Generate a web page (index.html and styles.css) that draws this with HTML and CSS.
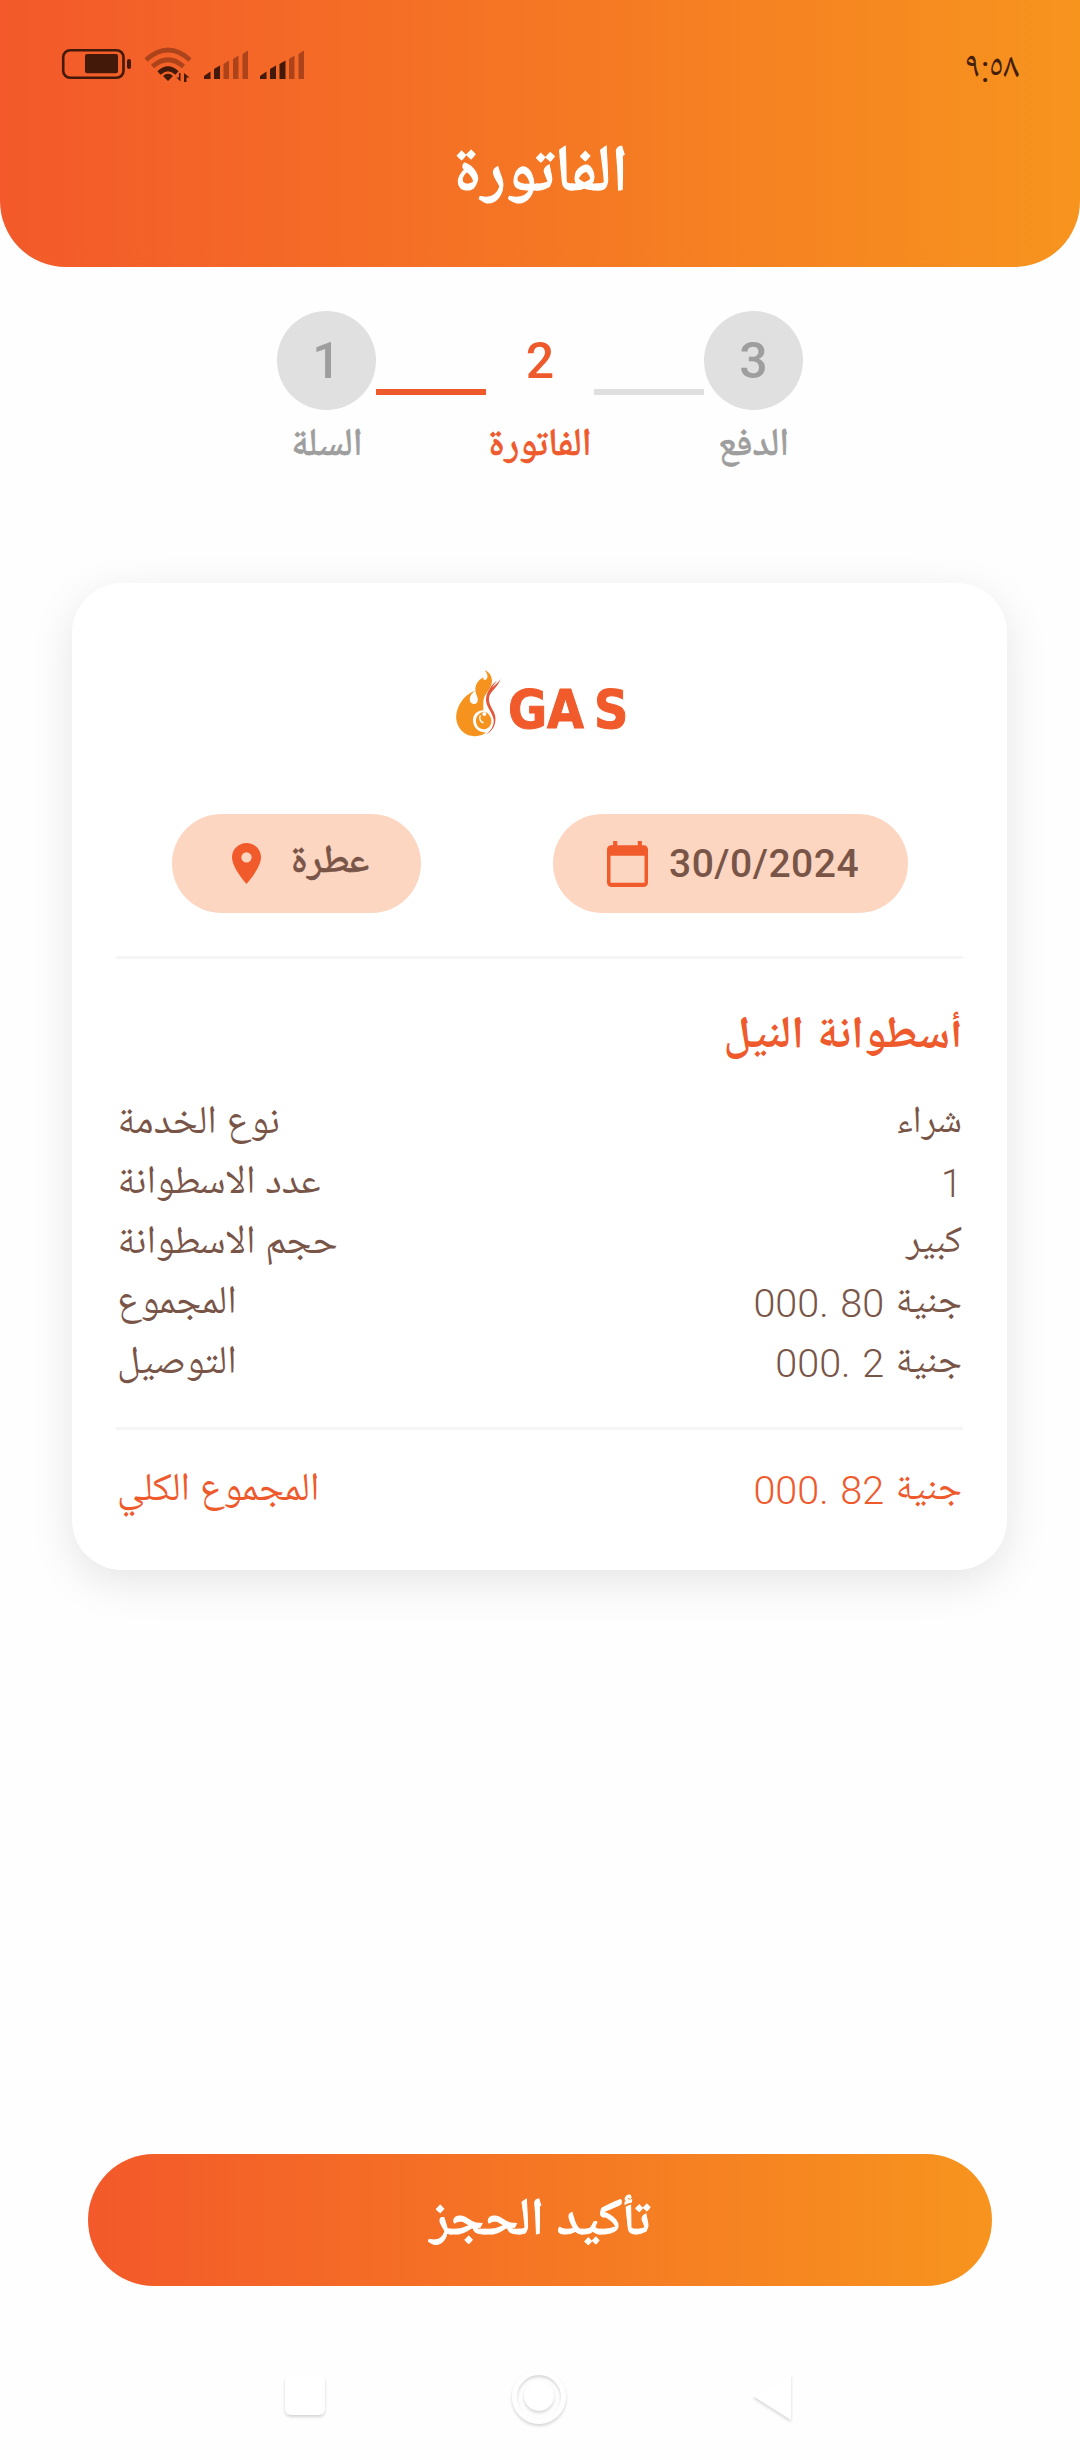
FILE: index.html
```html
<!DOCTYPE html>
<html lang="ar">
<head>
<meta charset="utf-8">
<title>الفاتورة</title>
<link rel="stylesheet" href="styles.css">
</head>
<body>
<header class="header">
  <div class="status">
    <svg class="status-icons" width="250" height="50" viewBox="50 40 250 50" fill="#43190a">
      <rect x="63.2" y="50.2" width="60.3" height="27.6" rx="7" fill="none" stroke="#43190a" stroke-width="2.6"/>
      <rect x="85" y="54" width="33" height="19.3" rx="2"/>
      <rect x="127" y="59" width="4" height="10" rx="2"/>
      <g fill="none" stroke-width="4.6">
        <path d="M146 60Q168 40 190 60" stroke="#ac431a"/>
        <path d="M152.500 66.500Q168 53 183.500 66.500" stroke="#ac431a"/>
        <path d="M159 73Q168 64.500 177 73" stroke="#43190a"/>
      </g>
      <path d="M163 76Q168 71.500 173 76L168 81ZM180.500 73V81.500L176.500 77.500H179V73ZM184 82V73L189.500 77.500H186.500V82Z"/>
      <path d="M204 79V76L210.500 71.500V79ZM214 79V69L220 65.500V79Z"/>
      <path d="M223.500 79V64L229 60.500V79ZM233 79V59L238.500 55.500V79ZM242.500 79V54L248 50.500V79Z" fill="#ac431a"/>
      <path d="M260 79V76L266.500 71.500V79ZM270 79V69L276 65.500V79ZM279.500 79V64L285.500 60.500V79Z"/>
      <path d="M289 79V59L294.500 55.500V79ZM298.500 79V54L304 50.500V79Z" fill="#ac431a"/>
    </svg>
    <time class="clock">٩:٥٨</time>
  </div>
  <h1 class="title">الفاتورة</h1>
</header>

<ol class="stepper">
  <li class="step"><span class="dot">1</span><span class="step-name">السلة</span></li>
  <li class="bar bar-done"></li>
  <li class="step active"><span class="dot">2</span><span class="step-name">الفاتورة</span></li>
  <li class="bar"></li>
  <li class="step"><span class="dot">3</span><span class="step-name">الدفع</span></li>
</ol>

<main class="card">
  <svg class="logo" width="180" height="76" viewBox="450 665 180 76">
    <g transform="translate(449 662) scale(.3333)">
      <path d="M107 25C117 36 119 50 109 54C103 55 102 50 104 46C86 54 76 72 80 90C83 104 90 110 84 122C78 128 67 127 63 118C61 107 65 96 78 87C42 98 16 142 23 178C30 210 58 226 84 222C96 221 106 217 112 211C88 213 71 196 72 172C74 156 86 145 103 145C104 133 101 120 105 108C110 93 128 78 129 58C129 40 119 29 107 25Z" fill="#f6931f"/>
      <path d="M104 149C88 153 79 165 81 180C84 197 98 204 110 201C121 198 127 188 127 178C128 163 116 149 104 149Z" fill="#f6931f"/>
      <path d="M94 160C90 170 94 181 104 182" fill="none" stroke="#fff" stroke-width="4"/>
      <circle cx="106" cy="156" r="6" fill="#fff"/>
      <path d="M106 220C128 211 142 190 139 164C136 145 118 130 120 108C122 87 145 81 156 49C148 64 135 71 129 77C131 71 137 67 143 56C131 65 126 73 121 82C112 96 108 112 114 128C120 144 132 158 134 173C136 193 122 211 106 220Z" fill="#e4573a"/>
    </g>
    <text class="logo-word" x="508 547 594" y="728">GAS</text>
  </svg>

  <div class="chips">
    <div class="chip chip-place">
      <svg width="29" height="41" viewBox="5 2 14 20" preserveAspectRatio="none" fill="#f15a2b"><path d="M12 2C8.130 2 5 5.130 5 9c0 5.250 7 13 7 13s7-7.750 7-13c0-3.870-3.130-7-7-7zm0 9.500a2.500 2.500 0 1 1 0-5 2.500 2.500 0 0 1 0 5z"/></svg>
      <span class="place">عطرة</span>
    </div>
    <div class="chip chip-date">
      <svg width="41" height="46" viewBox="2 1 20 22" preserveAspectRatio="none" fill="#f15a2b"><path d="M20 3h-1V1h-2v2H7V1H5v2H4c-1.100 0-2 .9-2 2v16c0 1.100.9 2 2 2h16c1.100 0 2-.9 2-2V5c0-1.100-.9-2-2-2zm.3 18H3.700V8h16.600v13z"/></svg>
      <span class="date">30/0/2024</span>
    </div>
  </div>

  <hr class="rule">
  <h2 class="product" dir="rtl">أسطوانة النيل</h2>
  <dl class="rows">
    <div class="row"><dt>نوع الخدمة</dt><dd dir="rtl">شراء</dd></div>
    <div class="row"><dt>عدد الاسطوانة</dt><dd dir="rtl">1</dd></div>
    <div class="row"><dt>حجم الاسطوانة</dt><dd dir="rtl">كبير</dd></div>
    <div class="row"><dt>المجموع</dt><dd dir="rtl">جنية <span class="num">80 .000</span></dd></div>
    <div class="row"><dt>التوصيل</dt><dd dir="rtl">جنية <span class="num">2 .000</span></dd></div>
  </dl>
  <hr class="rule">
  <dl class="rows total">
    <div class="row"><dt>المجموع الكلي</dt><dd dir="rtl">جنية <span class="num">82 .000</span></dd></div>
  </dl>
</main>

<button class="confirm" type="button"><span>تأكيد الحجز</span></button>

<nav class="sysnav">
  <svg width="540" height="70" viewBox="270 2362 540 70" fill="#fff">
    <rect class="key" x="285" y="2375" width="40" height="40" rx="6"/>
    <circle class="key" cx="539" cy="2397" r="24.5" fill="none" stroke="#fff" stroke-width="5"/>
    <circle class="key" cx="539" cy="2396" r="15"/>
    <path class="key" d="M753 2396L791 2374V2420Z"/>
  </svg>
</nav>
</body>
</html>
```
FILE: styles.css
```css
* { box-sizing: border-box; }

body {
  margin: 0;
  width: 1080px;
  height: 2460px;
  background: #fefefe;
  font-family: Roboto, "Noto Naskh Arabic UI", "Noto Naskh Arabic", "Noto Sans Arabic", "DejaVu Sans", sans-serif;
  color: #795548;
  display: flex;
  flex-direction: column;
  overflow: hidden;
}

h1, h2, ol, dl, dd { margin: 0; padding: 0; }

.header {
  height: 267px;
  border-radius: 0 0 66px 66px;
  background: linear-gradient(90deg, #f3592a, #f7941e);
}

.status {
  display: flex;
  justify-content: space-between;
  height: 100px;
  padding: 40px 61px 0 50px;
}
.status-icons { overflow: visible; }
.clock { font-size: 36px; line-height: 61px; color: #43200c; }

.title {
  text-align: center;
  color: #fff;
  font-size: 65px;
  font-weight: 500;
  line-height: 155px;
  padding-left: 2px;
  -webkit-text-stroke: 1.2px currentColor;
}

.stepper {
  list-style: none;
  display: flex;
  justify-content: center;
  height: 273px;
  padding-top: 44px;
}
.step {
  width: 99px;
  display: flex;
  flex-direction: column;
  align-items: center;
  color: #9e9e9e;
}
.step.active { width: 108px; color: #ee5a2c; }
.dot {
  width: 99px;
  height: 99px;
  border-radius: 50%;
  background: #e0e0e0;
  font-size: 50px;
  font-weight: 500;
  line-height: 101px;
  text-align: center;
}
.active .dot { background: none; }
.step-name {
  font-size: 38.5px;
  font-weight: 500;
  line-height: 73px;
  white-space: nowrap;
  -webkit-text-stroke: .7px currentColor;
}
.bar { width: 110px; height: 6px; margin-top: 78px; background: #e0e0e0; }
.bar-done { background: #ee5a2c; }

.card {
  width: 935px;
  height: 987px;
  margin: 43px 0 0 72px;
  padding: 82px 44px 0;
  border-radius: 50px;
  background: #fff;
  box-shadow: 0 12px 44px rgba(0, 0, 0, .1);
}
.logo { display: block; margin-left: 334px; }
.logo-word {
  font-family: "DejaVu Sans Condensed", "DejaVu Sans", sans-serif;
  font-stretch: condensed;
  font-size: 53px;
  font-weight: 700;
  fill: #f15a2b;
  stroke: #f15a2b;
  stroke-width: 1px;
}

.chips { display: flex; justify-content: space-between; margin: 73px 55px 43px 56px; }
.chip {
  height: 99px;
  border-radius: 50px;
  background: #fdd6c2;
  display: flex;
  align-items: center;
  font-weight: 500;
}
.chip-place { width: 249px; padding-left: 60px; gap: 30px; }
.chip-date { width: 355px; padding-left: 54px; gap: 21px; }
.place { font-size: 39.5px; line-height: 56px; -webkit-text-stroke: .7px currentColor; }
.date { font-size: 39px; letter-spacing: .5px; margin-top: 1px; }

.rule { height: 3px; margin: 0; border: 0; background: #f5f5f5; }

.product {
  margin-top: 46px;
  color: #ee5a2c;
  font-size: 45.5px;
  font-weight: 700;
  line-height: 67px;
}
.rows { margin-top: 23px; font-size: 38px; font-weight: 300; }
.row { display: flex; justify-content: space-between; height: 60px; line-height: 60px; padding: 0 1px; }
.row dt { font-size: 39.7px; }
.row dd { line-height: 58px; word-spacing: 2px; }
.num { font-size: 39.5px; letter-spacing: .8px; }
.rows + .rule { margin-top: 32px; }
.total { margin-top: 32px; color: #ee5a2c; }

.confirm {
  width: 904px;
  height: 132px;
  margin: 584px 0 0 88px;
  padding: 0;
  border: 0;
  border-radius: 66px;
  background: linear-gradient(90deg, #f3592a, #f7941e);
  color: #fff;
  font: inherit;
  font-size: 52px;
  font-weight: 500;
  -webkit-text-stroke: 1px currentColor;
  flex: none;
}

.sysnav { display: flex; justify-content: center; padding-top: 76px; }
.key { filter: drop-shadow(0 2px 1.500px rgba(0, 0, 0, .16)); }
```
